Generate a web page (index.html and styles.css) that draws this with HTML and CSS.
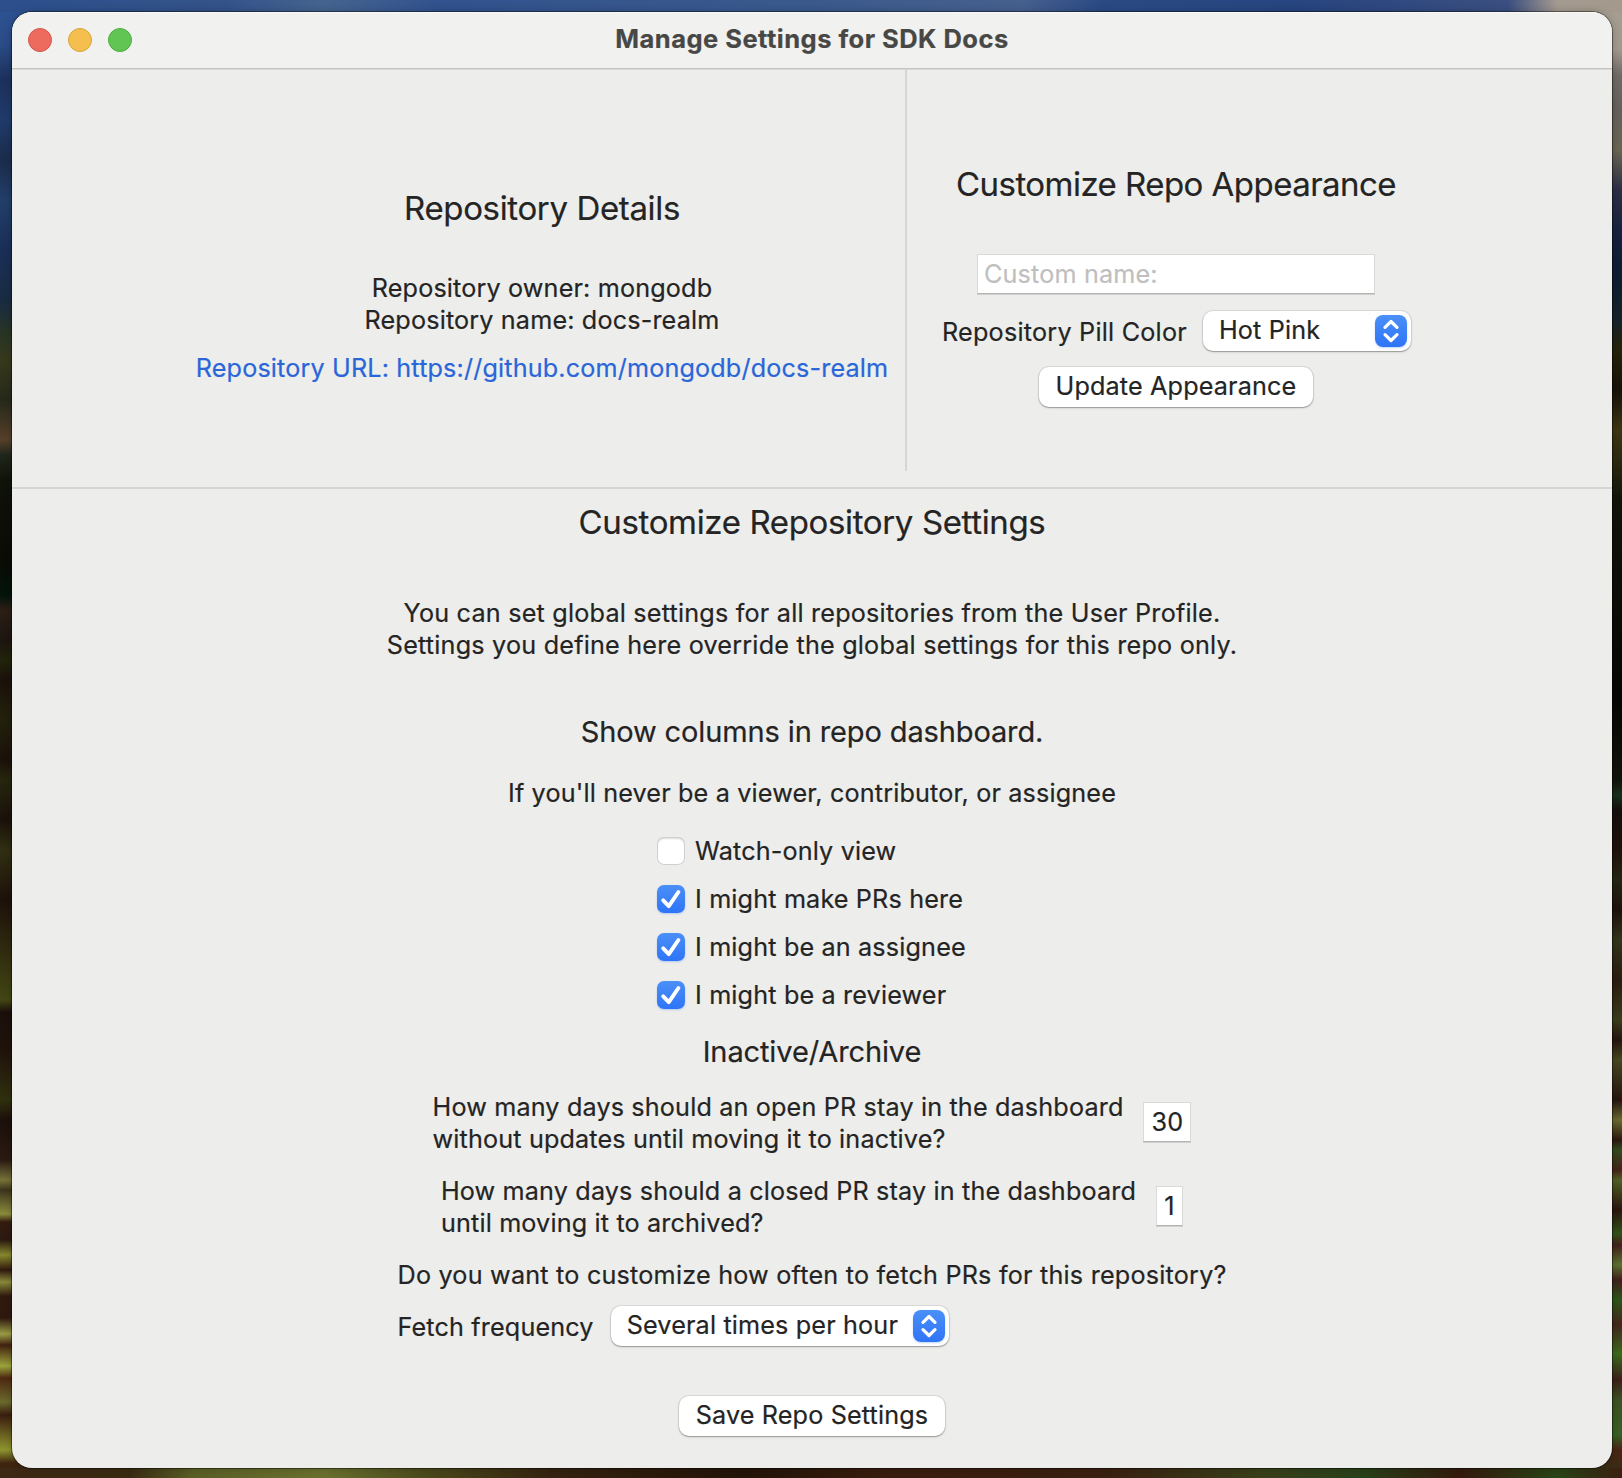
FILE: index.html
```html
<!DOCTYPE html>
<html lang="en">
<head>
<meta charset="utf-8">
<title>Manage Settings for SDK Docs</title>
<link rel="stylesheet" href="styles.css">
</head>
<body>
<svg class="symbols" aria-hidden="true">
  <symbol id="chevrons" viewBox="0 0 32 32">
    <path d="M10 12.3 16 6.5l6 5.8M10 19.7l6 5.8 6-5.8" fill="none" stroke="#fff" stroke-width="3.2" stroke-linecap="round" stroke-linejoin="round"/>
  </symbol>
  <symbol id="check" viewBox="0 0 28 28">
    <path d="M6.2 15.3 11.8 21.2 21.4 7" fill="none" stroke="#fff" stroke-width="3.9" stroke-linecap="round" stroke-linejoin="round"/>
  </symbol>
</svg>
<main class="window">
  <header class="titlebar">
    <div class="lights"><i class="light close"></i><i class="light minimize"></i><i class="light zoom"></i></div>
    <h1 class="title">Manage Settings for SDK Docs</h1>
  </header>
  <div class="top">
    <section class="details">
      <h2 class="heading">Repository Details</h2>
      <p class="owner">Repository owner: mongodb<br>Repository name: docs-realm</p>
      <a class="link">Repository URL: https://github.com/mongodb/docs-realm</a>
    </section>
    <div class="divider"></div>
    <section class="appearance">
      <h2 class="heading narrow">Customize Repo Appearance</h2>
      <div class="field name-field">Custom name:</div>
      <div class="row pill-row">
        <span class="pill-label">Repository Pill Color</span>
        <div class="select color-select"><span>Hot Pink</span><svg class="stepper"><use href="#chevrons"/></svg></div>
      </div>
      <button class="button">Update Appearance</button>
    </section>
  </div>
  <section class="settings">
    <h2 class="heading">Customize Repository Settings</h2>
    <p class="intro">You can set global settings for all repositories from the User Profile.<br>Settings you define here override the global settings for this repo only.</p>
    <h3 class="subheading">Show columns in repo dashboard.</h3>
    <p class="hint">If you'll never be a viewer, contributor, or assignee</p>
    <div class="checks">
      <label class="row check"><span class="box"></span><span>Watch-only view</span></label>
      <label class="row check"><svg class="box on"><use href="#check"/></svg><span>I might make PRs here</span></label>
      <label class="row check"><svg class="box on"><use href="#check"/></svg><span>I might be an assignee</span></label>
      <label class="row check"><svg class="box on"><use href="#check"/></svg><span>I might be a reviewer</span></label>
    </div>
    <h3 class="subheading archive">Inactive/Archive</h3>
    <div class="row days"><p>How many days should an open PR stay in the dashboard<br>without updates until moving it to inactive?</p><div class="field thirty">30</div></div>
    <div class="row days"><p>How many days should a closed PR stay in the dashboard<br>until moving it to archived?</p><div class="field one">1</div></div>
    <div class="fetch">
      <p class="question">Do you want to customize how often to fetch PRs for this repository?</p>
      <div class="row fetch-row">
        <span class="fetch-label">Fetch frequency</span>
        <div class="select fetch-select"><span>Several times per hour</span><svg class="stepper"><use href="#chevrons"/></svg></div>
      </div>
    </div>
    <button class="button save">Save Repo Settings</button>
  </section>
</main>
</body>
</html>
```
FILE: styles.css
```css
* { box-sizing: border-box; margin: 0; padding: 0; }
body {
  width: 1622px; height: 1478px; padding: 12px 10px 10px 12px; overflow: hidden;
  font: 400 25.2px/32px Inter, "Liberation Sans", sans-serif;
  letter-spacing: .15px;
  -webkit-text-stroke: .2px;
  color: #242424;
  background:
    linear-gradient(90deg, #2c4f8c, #34538a 14%, #45648f 20%, #32528f 27%, #3a5a8c 50%, #46608e 63%, #2a4a85 68%, #274580 80%, #3b4f80 93%, #a59a90 96%, #a39a8c) 0 0 / 100% 12px no-repeat,
    linear-gradient(90deg, #3c2814, #3a2a12 8%, #5a5f26 12%, #69702e 20%, #4a4a1c 26%, #35220f 34%, #231308 46%, #3a1d0e 55%, #3a2010 68%, #38401a 78%, #28401a 84%, #341a0c 90%, #2a4417 96%, #3a2010) 0 100% / 100% 10px no-repeat,
    linear-gradient(#2f5596, #2a4b86 45px, #1c315c 80px, #203b6b 120px, #1b2c4c 160px, #223f69 200px, #1a2f58 250px, #192b42 300px, #293523 335px, #37391c 360px, #26291a 400px, #56402a 440px, #20261c 455px, #10130a 480px, #0a0b05 560px, #03140a 595px, #2c1f16 610px, #1c1510 640px, #22240c 660px, #1b110b 680px, #23210c 720px, #1b110b 760px, #26260e 780px, #1b110b 820px, #302f12 850px, #1d110a 900px, #434614 1000px, #1a0f0b 1012px, #20130c 1050px, #30300f 1100px, #1c100b 1120px, #2a1a12 1160px, #777339 1180px, #3c341c 1190px, #8a8c3c 1214px, #351b10 1222px, #2c1a10 1240px, #86882e 1255px, #30180f 1270px, #88893a 1282px, #301a0e 1296px, #2f180f 1318px, #9a9d45 1334px, #42210f 1345px, #9ca43c 1366px, #4d2811 1378px, #6b6a2c 1402px, #3a1d0f 1415px, #8f962e 1450px, #40240f 1463px, #3a2412) 0 0 / 30px 100% no-repeat,
    linear-gradient(#a79e92, #a29a8f 50px, #6f6b65 75px, #65615c 110px, #6a6653 150px, #2c2f46 190px, #17223f 230px, #0d1d33 270px, #14232a 320px, #252409 350px, #161308 390px, #3e3612 430px, #2b2a10 460px, #12140a 500px, #060704 700px, #10140a 780px, #17301b 795px, #14100c 810px, #20100b 850px, #242613 880px, #1e120c 910px, #32361a 940px, #2a1c10 980px, #3a3e1a 1020px, #27150e 1040px, #464820 1060px, #26140e 1100px, #6a6a2e 1120px, #2c180f 1140px, #314c1d 1150px, #45231a 1170px, #506026 1180px, #2a160d 1210px, #32531a 1234px, #40221a 1245px, #5d7030 1265px, #40201a 1280px, #2e5518 1300px, #44261a 1325px, #3c6a1e 1354px, #3c2018 1380px, #3c5222 1400px, #386022 1435px, #4a2415 1450px, #2f3014) 100% 0 / 30px 100% no-repeat,
    #241a10;
}
h1, h2, h3 { font-weight: 400; }
.symbols { display: none; }
.window {
  width: 1600px; height: 1456px; border-radius: 20px; overflow: hidden; background: #ededeb;
  display: flex; flex-direction: column;
  box-shadow: 0 0 0 1px rgba(0,0,0,.4), 0 0 8px rgba(0,0,0,.25);
}
.titlebar {
  height: 58px; flex: none; background: #f1f1ef; display: grid; grid-template-columns: 1fr auto 1fr;
  border-bottom: 1px solid #d9d9d7; box-shadow: inset 0 -1px #c5c5c3, inset 0 1px #fafaf9;
}
.lights { display: flex; gap: 16px; padding: 16px; }
.light { width: 24px; height: 24px; border-radius: 50%; border: 1px solid; }
.close { background: #ec6a5e; border-color: #d5574c; }
.minimize { background: #f5bf4f; border-color: #d9a33e; }
.zoom { background: #61c554; border-color: #4eab40; }
.title { font-size: 25.5px; line-height: 32px; font-weight: 700; color: #474746; padding-top: 11px; letter-spacing: .48px; }
.heading { font-size: 33px; line-height: 40px; letter-spacing: -.36px; }
.narrow { letter-spacing: -.54px; }
.subheading { font-size: 29px; line-height: 36px; letter-spacing: -.12px; }
.top { flex: none; height: 419px; display: flex; border-bottom: 2px solid #d5d5d3; }
.details { width: 893px; padding: 118px 16px 0 0; display: flex; flex-direction: column; align-items: flex-end; }
.details > * { width: 694px; text-align: center; white-space: nowrap; }
.owner { margin: 44px 0 16px; }
.link { color: #2a66d8; }
.divider { width: 2px; height: 402px; margin-top: -1px; background: #d5d5d3; }
.appearance { padding: 94px 0 0 34px; width: 504px; display: flex; flex-direction: column; align-items: center; }
.row { display: flex; align-items: center; }
.field {
  flex: none; height: 40px; line-height: 38px; padding: 0 6px; background: #fff; white-space: nowrap;
  border: 1px solid #dadad8; border-bottom-color: #b4b4b2; box-shadow: 0 1px #cfcfcd;
}
.name-field { width: 398px; margin-top: 50px; color: #bfbfbf; }
.pill-row { margin-top: 17px; width: 470px; justify-content: space-between; white-space: nowrap; }
.pill-label, .fetch-label { padding-top: 2px; }
.pill-label { padding-left: 1px; letter-spacing: .22px; }
.select, .button {
  height: 40px; border: 0; border-radius: 10px; background: #fff; color: #242424; font: inherit; line-height: 38px; letter-spacing: inherit;
  box-shadow: 0 0 0 1px rgba(0,0,0,.07), 0 1px 1px rgba(0,0,0,.22), 0 1px 3px rgba(0,0,0,.12); white-space: nowrap;
}
.select { display: flex; justify-content: space-between; padding: 0 4px 0 16px; }
.color-select { width: 208px; }
.stepper { width: 32px; height: 32px; margin-top: 4px; border-radius: 8px; background: linear-gradient(#4a90f8, #2f74f6); box-shadow: 0 1px 2px rgba(47,116,246,.3); }
.button { width: 274px; margin-top: 16px; padding-bottom: 2px; }
.settings { display: flex; flex-direction: column; align-items: center; padding-top: 13px; }
.intro { margin-top: 55px; text-align: center; letter-spacing: .2px; }
.intro + .subheading { margin-top: 53px; }
.hint { margin-top: 27px; }
.checks { margin-top: 26px; width: 310px; display: flex; flex-direction: column; gap: 16px; }
.check { gap: 10px; white-space: nowrap; }
.box { flex: none; width: 28px; height: 28px; border-radius: 7px; background: #fff; box-shadow: inset 0 0 0 1px #d0d0ce, inset 0 2px 2px rgba(0,0,0,.14); }
.on { background: linear-gradient(#4a90f8, #2f74f6); box-shadow: 0 1px 2px rgba(47,116,246,.3); }
.archive { margin-top: 23px; }
.days { margin-top: 20px; gap: 20px; white-space: nowrap; }
.archive + .days { margin-top: 21px; }
.days .field { margin-bottom: 2px; text-align: center; padding: 0; }
.thirty { width: 48px; }
.one { width: 27px; }
.fetch { width: 829px; margin-top: 20px; white-space: nowrap; }
.question { letter-spacing: .21px; }
.fetch-row { margin-top: 15px; gap: 17px; }
.fetch-select { width: 338px; }
.save { width: 266px; margin-top: 50px; }
```
